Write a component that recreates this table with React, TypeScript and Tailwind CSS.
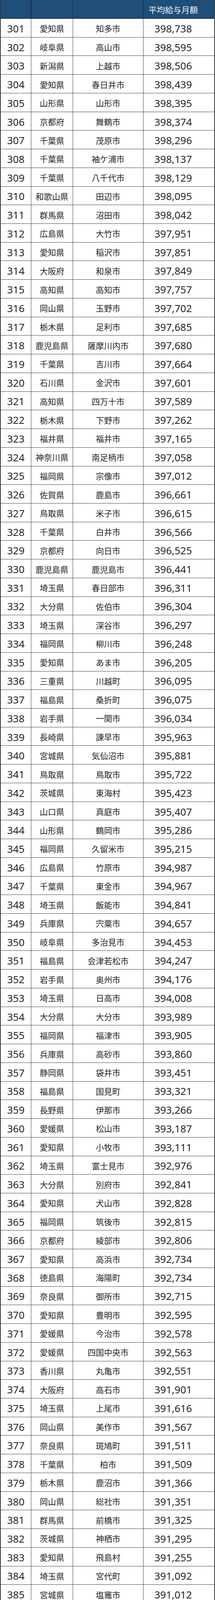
import React from 'react';

type Row = [number, string, string, string];

const rows: Row[] = [
  [301, '愛知県', '知多市', '398,738'],
  [302, '岐阜県', '高山市', '398,595'],
  [303, '新潟県', '上越市', '398,506'],
  [304, '愛知県', '春日井市', '398,439'],
  [305, '山形県', '山形市', '398,395'],
  [306, '京都府', '舞鶴市', '398,374'],
  [307, '千葉県', '茂原市', '398,296'],
  [308, '千葉県', '袖ケ浦市', '398,137'],
  [309, '千葉県', '八千代市', '398,129'],
  [310, '和歌山県', '田辺市', '398,095'],
  [311, '群馬県', '沼田市', '398,042'],
  [312, '広島県', '大竹市', '397,951'],
  [313, '愛知県', '稲沢市', '397,851'],
  [314, '大阪府', '和泉市', '397,849'],
  [315, '高知県', '高知市', '397,757'],
  [316, '岡山県', '玉野市', '397,702'],
  [317, '栃木県', '足利市', '397,685'],
  [318, '鹿児島県', '薩摩川内市', '397,680'],
  [319, '千葉県', '吉川市', '397,664'],
  [320, '石川県', '金沢市', '397,601'],
  [321, '高知県', '四万十市', '397,589'],
  [322, '栃木県', '下野市', '397,262'],
  [323, '福井県', '福井市', '397,165'],
  [324, '神奈川県', '南足柄市', '397,058'],
  [325, '福岡県', '宗像市', '397,012'],
  [326, '佐賀県', '鹿島市', '396,661'],
  [327, '鳥取県', '米子市', '396,615'],
  [328, '千葉県', '白井市', '396,566'],
  [329, '京都府', '向日市', '396,525'],
  [330, '鹿児島県', '鹿児島市', '396,441'],
  [331, '埼玉県', '春日部市', '396,311'],
  [332, '大分県', '佐伯市', '396,304'],
  [333, '埼玉県', '深谷市', '396,297'],
  [334, '福岡県', '柳川市', '396,248'],
  [335, '愛知県', 'あま市', '396,205'],
  [336, '三重県', '川越町', '396,095'],
  [337, '福島県', '桑折町', '396,075'],
  [338, '岩手県', '一関市', '396,034'],
  [339, '長崎県', '諫早市', '395,963'],
  [340, '宮城県', '気仙沼市', '395,881'],
  [341, '鳥取県', '鳥取市', '395,722'],
  [342, '茨城県', '東海村', '395,423'],
  [343, '山口県', '真庭市', '395,407'],
  [344, '山形県', '鶴岡市', '395,286'],
  [345, '福岡県', '久留米市', '395,215'],
  [346, '広島県', '竹原市', '394,987'],
  [347, '千葉県', '東金市', '394,967'],
  [348, '埼玉県', '飯能市', '394,841'],
  [349, '兵庫県', '宍粟市', '394,657'],
  [350, '岐阜県', '多治見市', '394,453'],
  [351, '福島県', '会津若松市', '394,247'],
  [352, '岩手県', '奥州市', '394,176'],
  [353, '埼玉県', '日高市', '394,008'],
  [354, '大分県', '大分市', '393,989'],
  [355, '福岡県', '福津市', '393,905'],
  [356, '兵庫県', '高砂市', '393,860'],
  [357, '静岡県', '袋井市', '393,451'],
  [358, '福島県', '国見町', '393,321'],
  [359, '長野県', '伊那市', '393,266'],
  [360, '愛媛県', '松山市', '393,187'],
  [361, '愛知県', '小牧市', '393,111'],
  [362, '埼玉県', '富士見市', '392,976'],
  [363, '大分県', '別府市', '392,841'],
  [364, '愛知県', '犬山市', '392,828'],
  [365, '福岡県', '筑後市', '392,815'],
  [366, '京都府', '綾部市', '392,806'],
  [367, '愛知県', '高浜市', '392,734'],
  [368, '徳島県', '海陽町', '392,734'],
  [369, '奈良県', '御所市', '392,715'],
  [370, '愛知県', '豊明市', '392,595'],
  [371, '愛媛県', '今治市', '392,578'],
  [372, '愛媛県', '四国中央市', '392,563'],
  [373, '香川県', '丸亀市', '392,551'],
  [374, '大阪府', '高石市', '391,901'],
  [375, '埼玉県', '上尾市', '391,616'],
  [376, '岡山県', '美作市', '391,567'],
  [377, '奈良県', '斑鳩町', '391,511'],
  [378, '千葉県', '柏市', '391,509'],
  [379, '栃木県', '鹿沼市', '391,366'],
  [380, '岡山県', '総社市', '391,351'],
  [381, '群馬県', '前橋市', '391,325'],
  [382, '茨城県', '神栖市', '391,295'],
  [383, '愛知県', '飛島村', '391,255'],
  [384, '埼玉県', '宮代町', '391,092'],
  [385, '宮城県', '塩竈市', '391,012'],
  [386, '茨城県', '水戸市', '390,979'],
  [387, '大分県', '豊後高田市', '390,969'],
  [388, '北海道', '新ひだか町', '390,965'],
  [389, '', '浜松市', '390,878'],
  [390, '福岡県', '嘉麻市', '390,868'],
  [391, '三重県', '松阪市', '390,866'],
  [392, '静岡県', '熱海市', '390,793'],
  [393, '秋田県', '横手市', '390,778'],
  [394, '茨城県', 'つくばみらい市', '390,661'],
  [395, '埼玉県', '坂戸市', '390,647'],
  [396, '三重県', 'いなべ市', '390,582'],
  [397, '大分県', '日田市', '390,551'],
  [398, '兵庫県', '市川町', '390,512'],
  [399, '栃木県', '真岡市', '390,497'],
  [400, '山形県', '米沢市', '390,479'],
];

// the one row the source table marks in light blue
const HIGHLIGHT = 389;

export default function App() {
  return (
    <div className="grid h-[4821px] w-[550px] grid-rows-[48px_repeat(100,minmax(0,1fr))] overflow-hidden bg-white border-x-2 border-[#3a3a3a] text-[#262626] leading-none font-['Noto_Sans_CJK_JP',sans-serif]">
      <div className="grid grid-cols-[78px_107px_180px_1fr] bg-[#1f4e79] border-b-2 border-[#2b2b2b] text-[#eef3f8]">
        <div className="border-r-2 border-[#1a2a3c]" />
        <div className="border-r border-[#1a2a3c]" />
        <div className="border-r border-[#1a2a3c]" />
        <div className="flex items-center justify-center pr-[29px] pt-[2px] text-[21px]">
          平均給与月額
        </div>
      </div>

      {rows.map(([rank, pref, city, amount]) => {
        const hl = rank === HIGHLIGHT;
        const bg = hl ? 'bg-[#ddebf7]' : 'bg-white';
        return (
          <div key={rank} className="grid min-h-0 grid-cols-[78px_107px_180px_1fr] border-b border-[#444]">
            <div className="flex items-center justify-center border-r border-[#444] pt-[3px] text-[26px] font-['Noto_Sans',sans-serif]">
              {rank}
            </div>
            <div className={`flex items-center justify-center whitespace-nowrap border-r border-[#444] pt-[3px] text-[21px] ${bg}`}>
              {pref}
            </div>
            <div className={`flex items-center justify-center whitespace-nowrap border-r border-[#444] pt-[3px] text-[21px] ${bg}`}>
              {city}
            </div>
            <div className={`flex items-center justify-center pr-[29px] pt-[3px] text-[26px] font-['Noto_Sans',sans-serif] ${bg}`}>
              {amount}
            </div>
          </div>
        );
      })}
    </div>
  );
}
